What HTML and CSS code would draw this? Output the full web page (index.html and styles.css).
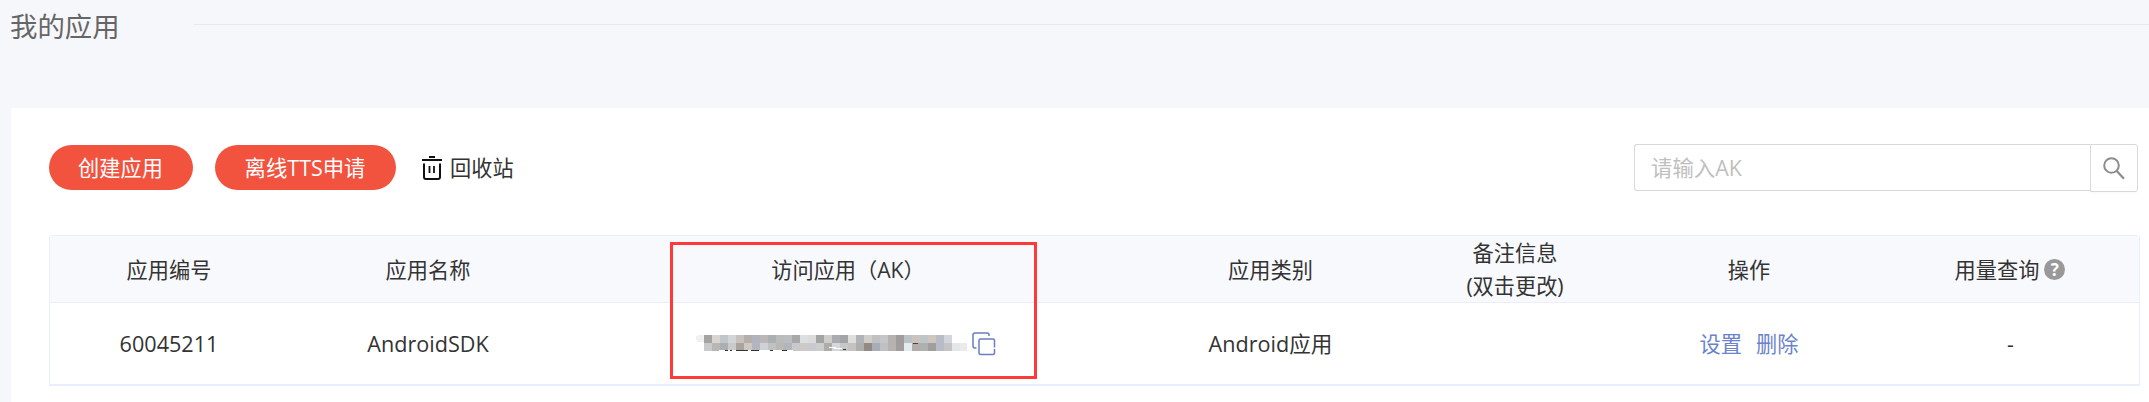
FILE: index.html
```html
<!DOCTYPE html>
<html lang="zh-CN">
<head>
<meta charset="utf-8">
<title>我的应用</title>
<link rel="stylesheet" href="styles.css">
</head>
<body>
<header class="page-head">
  <h1 class="page-title">我的应用</h1>
  <div class="page-rule"></div>
</header>
<main class="panel">
  <div class="toolbar">
    <button class="btn btn-create">创建应用</button>
    <button class="btn btn-tts">离线TTS申请</button>
    <a class="recycle">
      <svg class="trash" viewBox="0 0 20 24" fill="none" stroke="#111" stroke-width="2">
        <path d="M0 4H20M7 1H13"/><path d="M2 7.5V21Q2 23 4 23H16Q18 23 18 21V7.5"/><path d="M7.5 10V17M12 10V17" stroke-width="1.8"/>
      </svg>
      <span>回收站</span>
    </a>
    <div class="search">
      <div class="search-input">请输入AK</div>
      <div class="search-btn">
        <svg class="lens" viewBox="0 0 22 23" fill="none" stroke="#8c8c8c" stroke-width="2"><circle cx="8.500" cy="8.500" r="7.300"/><path d="M13.700 14L21 21.700" stroke-width="2.300"/></svg>
      </div>
    </div>
  </div>
  <div class="table">
    <div class="row row-head">
      <div class="cell">应用编号</div>
      <div class="cell">应用名称</div>
      <div class="cell cell-ak">访问应用（AK）</div>
      <div class="cell">应用类别</div>
      <div class="cell">备注信息<br>(双击更改)</div>
      <div class="cell">操作</div>
      <div class="cell cell-usage">用量查询<span class="help">?</span></div>
    </div>
    <div class="row row-body">
      <div class="cell latin">60045211</div>
      <div class="cell latin">AndroidSDK</div>
      <div class="cell cell-key">
        <svg class="mosaic" id="mosaic" viewBox="0 0 272 18" shape-rendering="crispEdges"></svg>
        <svg class="copy" viewBox="0 0 24 24" fill="none" stroke="#6b7cc0" stroke-width="1.500"><path d="M17 4V3Q17 1 15 1H3Q1 1 1 3V14Q1 16 3 16H4.500"/><path d="M22.500 17V21Q22.500 22.500 21 22.500H8.500Q7 22.500 7 21V8.500Q7 7 8.500 7H21Q22.500 7 22.500 8.500V15.500"/></svg>
      </div>
      <div class="cell latin">Android应用</div>
      <div class="cell"></div>
      <div class="cell cell-actions"><a>设置</a><a>删除</a></div>
      <div class="cell cell-dash">-</div>
    </div>
    <div class="highlight"></div>
  </div>
</main>
<script src="mosaic.js"></script>
</body>
</html>
```
FILE: mosaic.js
```js
// Pixelated cover over the access key: two rows of 8px blocks.
const rows = [
  "a3a3a3 d8d5d2 bfc5ca d3d4d5 c8c1bc b3aeab afb4c0 bbb7b4 acafb1 bbbbbb bbbec0 a8a8a8 dce0e3 dcdbda a2a3a5 cecdca a9abb0 a3a4a5 dfdedd b0b4ba d0ceca c0c1c0 c4c6ca b5b2b0 a09b9c b9c3c5 cbc3be c0c5ca cec7c0 b8bcc7 d2d5db",
  "c9cacb b8b7b5 acaeb0 c9cacb a8a39f d1c7c1 b2b6bf cfd1d6 c1c1c2 b8b8b7 b2b6bc c8c9ca cdcac8 c9cacf cccdce aeaca8 d5d7dc c7c7c8 c4c3c2 aeafad 938882 a7adb8 bfc0c3 b5b2af a19c9e e4ebec b4aca9 afb1b0 a19f9b b8bcc6 c4c4c5 e2e6e9 ebebeb"
];
const svg = document.getElementById("mosaic");
function block(x, y, w, h, fill) {
  const r = document.createElementNS("http://www.w3.org/2000/svg", "rect");
  const box = { x, y, width: w, height: h, fill };
  for (const k in box) r.setAttribute(k, box[k]);
  svg.appendChild(r);
}
block(1, 0, 7, 7, "#f0f0ef");
block(0, 1, 1, 4, "#f0f0ef");
rows.forEach((line, j) => line.split(" ").forEach((c, i) => {
  block(8 + i * 8, j * 8, i === 32 ? 7 : 8, 8, "#" + c);
}));
// Slivers of the key left visible under the blocks.
block(23, 15, 74, 1, "#fff");
[[29, 3], [34, 2], [40, 12], [55, 8], [74, 3], [86, 5]].forEach(([x, w]) => block(x, 15, w, 1, "#333"));
block(133, 12, 7, 1, "#fff");
block(138, 13, 8, 1, "#fff");
block(147, 14, 3, 1, "#333");
block(217, 8, 5, 1, "#444");
```
FILE: styles.css
```css
body {
  margin: 0;
  height: 402px;
  overflow: hidden;
  background: #f6f7fb;
  color: #333;
  font: 21.2px/33px "Open Sans", "Noto Sans CJK SC", sans-serif;
}
.page-head {
  display: flex;
  height: 108px;
  padding-left: 10px;
}
.page-title {
  width: 184px;
  margin: 0;
  padding-top: 7px;
  color: #666;
  font-size: 27.4px;
  font-weight: 400;
  line-height: 40px;
}
.page-rule {
  flex: 1;
  height: 1px;
  margin-top: 24px;
  background: #e8e8ea;
}
.panel {
  box-sizing: border-box;
  height: 294px;
  margin-left: 11px;
  padding: 36px 9px 0 38px;
  background: #fff;
}
.toolbar {
  display: flex;
  align-items: flex-start;
  height: 91px;
}
.btn {
  height: 45px;
  margin: 1px 22px 0 0;
  padding: 0 1px 0 0;
  border: 0;
  border-radius: 23px;
  background: #f2533f;
  color: #fff;
  font: inherit;
}
.btn-create { width: 144px; }
.btn-tts { width: 181px; font-size: 21.4px; }
.recycle {
  display: flex;
  align-items: center;
  gap: 8px;
  height: 45px;
  margin: 1px 0 0 4px;
}
.trash { width: 20px; height: 24px; }
.search {
  display: flex;
  align-items: flex-start;
  margin: 0 2px 0 auto;
}
.search-input {
  box-sizing: border-box;
  width: 456px;
  height: 47px;
  padding-left: 16px;
  border: 1px solid #d9d9d9;
  border-right: 0;
  border-radius: 3px 0 0 3px;
  color: #bfbfbf;
  font-size: 21.4px;
  line-height: 46px;
}
.search-btn {
  display: flex;
  box-sizing: border-box;
  width: 48px;
  height: 48px;
  padding: 12px 0 0 12px;
  border: 1px solid #d9d9d9;
  border-radius: 0 3px 3px 0;
  box-shadow: 0 2px 0 rgba(0, 0, 0, .015);
}
.lens { width: 22px; height: 23px; }
.table {
  position: relative;
  box-sizing: border-box;
  width: 2091px;
  height: 151px;
  border: 1px solid #e8eefb;
  border-bottom: 2px solid #e8eefd;
  border-radius: 4px 4px 0 0;
}
.row {
  display: grid;
  grid-template-columns: 238px 280px 555px 295px 194px 274px 253px;
}
.row-head {
  box-sizing: border-box;
  height: 67px;
  border-bottom: 1px solid #ebeef5;
  background: #f8f9fd;
}
.row-body {
  box-sizing: border-box;
  height: 81px;
}
.cell {
  display: flex;
  align-items: center;
  justify-content: center;
  text-align: center;
}
.latin { font-size: 21.6px; }
.cell-ak { padding-left: 5px; }
.cell-key { gap: 4px; padding-top: 1px; }
.mosaic { width: 272px; height: 18px; }
.copy { width: 24px; height: 24px; }
.cell-usage { gap: 5px; padding-right: 5px; }
.help {
  width: 21px;
  height: 21px;
  border-radius: 50%;
  background: #999;
  color: #fff;
  font-size: 17px;
  font-weight: 700;
  line-height: 21px;
}
.cell-actions { gap: 14px; color: #6b83cd; }
.cell-dash { padding-right: 4px; }
.highlight {
  position: absolute;
  left: 620px;
  top: 6px;
  box-sizing: border-box;
  width: 367px;
  height: 137px;
  border: 3px solid #ff3838;
}
```
